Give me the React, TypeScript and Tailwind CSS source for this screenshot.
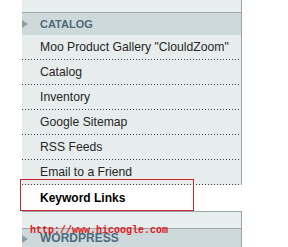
const items = ['Moo Product Gallery "ClouldZoom"', 'Catalog', 'Inventory', 'Google Sitemap', 'RSS Feeds', 'Email to a Friend'];

function Dots() {
  return <div className="h-px bg-[repeating-linear-gradient(to_right,#3a3a3a_0_1px,transparent_1px_3px)]" />;
}

function Arrow() {
  return (
    <svg width="6" height="8" viewBox="0 0 6 8" className="shrink-0">
      <path d="M0 0 L6 4 L0 8 Z" fill="#8c9ea6" />
    </svg>
  );
}

export default function App() {
  return (
    <div className="relative h-[247px] w-[288px] overflow-hidden bg-white font-['Liberation_Sans',Arial,sans-serif]">
      <div className="ml-[22px] w-[220px]">
        {/* previous section bottom */}
        <div className="h-[13px] border-r border-b border-[#9aa6a8] bg-[#e7eeee]" />

        {/* Catalog header */}
        <div className="flex h-[22px] items-center border-r border-[#9aa6a8] bg-[#cdd9db]">
          <Arrow />
          <span className="ml-[12px] text-[11px] font-bold text-[#4d6a7a]">CATALOG</span>
        </div>

        {/* Items */}
        {items.map((item) => (
          <div key={item} className="border-r border-[#9aa6a8] bg-[#e7eded]">
            <div className="flex h-[24px] items-center pl-[18px] text-[12.2px] text-[#262626]">{item}</div>
            <Dots />
          </div>
        ))}

        {/* Keyword Links row */}
        <div className="flex h-[26px] items-center pl-[18px] text-[12px] font-bold text-black">Keyword Links</div>

        {/* next section */}
        <div className="h-[18px] border-t border-r border-b border-[#9aa6a8] bg-[#e7eeee]" />
        <div className="flex h-[22px] items-start border-r border-[#9aa6a8] bg-[#cdd9db] pt-[1px]">
          <div className="mt-[5px]">
            <Arrow />
          </div>
          <span className="ml-[12px] text-[12px] leading-[16px] font-bold text-[#4d6a7a]">WORDPRESS</span>
        </div>
      </div>

      {/* red highlight box */}
      <div className="absolute left-[20px] top-[179px] h-[32px] w-[174px] border border-[#c8262a]" />

      {/* watermark */}
      <div className="absolute left-[30px] top-[223px] font-['Liberation_Mono',monospace] text-[10px] font-bold text-[#e01818]">
        http://www.hicoogle.com
      </div>
    </div>
  );
}
